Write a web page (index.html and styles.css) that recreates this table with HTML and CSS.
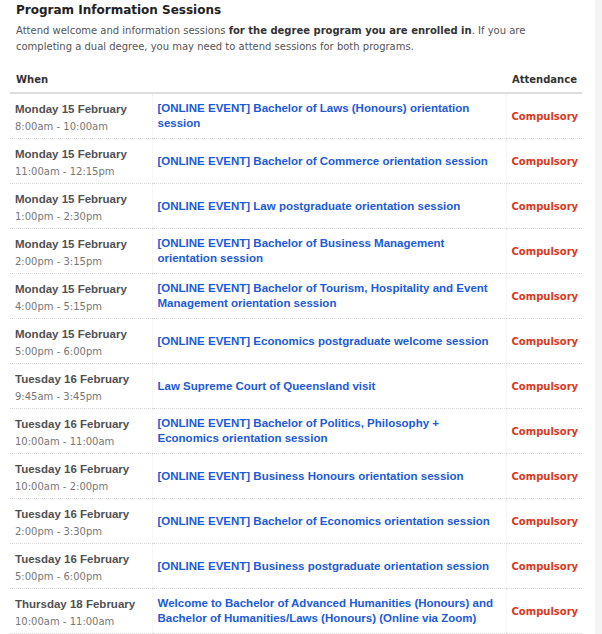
FILE: index.html
```html
<!DOCTYPE html>
<html lang="en">
<head>
<meta charset="utf-8">
<title>Program Information Sessions</title>
<link rel="stylesheet" href="styles.css">
</head>
<body>
<div class="page">
  <main class="main">
    <h2 class="title">Program Information Sessions</h2>
    <p class="intro">Attend welcome and information sessions <strong>for the degree program you are enrolled in</strong>. If you are completing a dual degree, you may need to attend sessions for both programs.</p>
    <table class="sessions">
      <colgroup><col class="col-when"><col class="col-event"><col class="col-att"></colgroup>
      <thead>
        <tr><th>When</th><th></th><th>Attendance</th></tr>
      </thead>
      <tbody>
        <tr><td class="when"><div class="date">Monday 15 February</div><div class="time">8:00am - 10:00am</div></td><td class="event"><a href="#">[ONLINE EVENT] Bachelor of Laws (Honours) orientation session</a></td><td class="att">Compulsory</td></tr>
        <tr><td class="when"><div class="date">Monday 15 February</div><div class="time">11:00am - 12:15pm</div></td><td class="event"><a href="#">[ONLINE EVENT] Bachelor of Commerce orientation session</a></td><td class="att">Compulsory</td></tr>
        <tr><td class="when"><div class="date">Monday 15 February</div><div class="time">1:00pm - 2:30pm</div></td><td class="event"><a href="#">[ONLINE EVENT] Law postgraduate orientation session</a></td><td class="att">Compulsory</td></tr>
        <tr><td class="when"><div class="date">Monday 15 February</div><div class="time">2:00pm - 3:15pm</div></td><td class="event"><a href="#">[ONLINE EVENT] Bachelor of Business Management orientation session</a></td><td class="att">Compulsory</td></tr>
        <tr><td class="when"><div class="date">Monday 15 February</div><div class="time">4:00pm - 5:15pm</div></td><td class="event"><a href="#">[ONLINE EVENT] Bachelor of Tourism, Hospitality and Event Management orientation session</a></td><td class="att">Compulsory</td></tr>
        <tr><td class="when"><div class="date">Monday 15 February</div><div class="time">5:00pm - 6:00pm</div></td><td class="event"><a href="#">[ONLINE EVENT] Economics postgraduate welcome session</a></td><td class="att">Compulsory</td></tr>
        <tr><td class="when"><div class="date">Tuesday 16 February</div><div class="time">9:45am - 3:45pm</div></td><td class="event"><a href="#">Law Supreme Court of Queensland visit</a></td><td class="att">Compulsory</td></tr>
        <tr><td class="when"><div class="date">Tuesday 16 February</div><div class="time">10:00am - 11:00am</div></td><td class="event"><a href="#">[ONLINE EVENT] Bachelor of Politics, Philosophy + Economics orientation session</a></td><td class="att">Compulsory</td></tr>
        <tr><td class="when"><div class="date">Tuesday 16 February</div><div class="time">10:00am - 2:00pm</div></td><td class="event"><a href="#">[ONLINE EVENT] Business Honours orientation session</a></td><td class="att">Compulsory</td></tr>
        <tr><td class="when"><div class="date">Tuesday 16 February</div><div class="time">2:00pm - 3:30pm</div></td><td class="event"><a href="#">[ONLINE EVENT] Bachelor of Economics orientation session</a></td><td class="att">Compulsory</td></tr>
        <tr><td class="when"><div class="date">Tuesday 16 February</div><div class="time">5:00pm - 6:00pm</div></td><td class="event"><a href="#">[ONLINE EVENT] Business postgraduate orientation session</a></td><td class="att">Compulsory</td></tr>
        <tr><td class="when"><div class="date">Thursday 18 February</div><div class="time">10:00am - 11:00am</div></td><td class="event"><a href="#">Welcome to Bachelor of Advanced Humanities (Honours) and Bachelor of Humanities/Laws (Honours) (Online via Zoom)</a></td><td class="att">Compulsory</td></tr>
      </tbody>
    </table>
  </main>
  <aside class="gutter"></aside>
</div>
</body>
</html>
```
FILE: styles.css
```css
html, body {
  margin: 0;
  padding: 0;
  background: #fff;
}
.page {
  display: flex;
  min-height: 634px;
}
.main {
  flex: 0 0 595px;
  box-sizing: border-box;
  padding: 0 13px 0 10px;
  font-family: "DejaVu Sans", Verdana, sans-serif;
}
.gutter {
  flex: 1;
  background: #f4f4f4;
}
.title {
  margin: 0;
  padding: 0 6px;
  font-size: 12px;
  line-height: 20px;
  font-weight: bold;
  color: #222;
}
.intro {
  margin: 3px 0 0;
  padding: 0 6px;
  font-size: 10px;
  line-height: 16px;
  color: #555;
}
.intro strong {
  color: #333;
}
.sessions {
  width: 100%;
  margin-top: 15px;
  border-collapse: collapse;
  table-layout: fixed;
}
.col-when { width: 142px; }
.col-att { width: 76px; }
.sessions th {
  text-align: left;
  font-size: 10px;
  line-height: 16px;
  font-weight: bold;
  color: #333;
  padding: 2px 6px 4px;
  border-bottom: 2px solid #ddd;
}
.sessions td {
  height: 44px;
  padding: 0 6px 0 5px;
  vertical-align: middle;
  border-bottom: 1px dotted #d8d8d8;
}
.sessions td + td {
  border-left: 1px dotted #efefef;
}
.sessions td.event {
  padding-left: 5px;
  font-family: "Liberation Sans", Arial, sans-serif;
  font-size: 11.5px;
  line-height: 15px;
}
.date {
  margin-top: 4px;
  font-family: "Liberation Sans", Arial, sans-serif;
  font-weight: bold;
  font-size: 11.5px;
  line-height: 16px;
  color: #515151;
  white-space: nowrap;
}
.time {
  font-size: 10px;
  line-height: 16px;
  color: #777;
  margin-top: 2px;
  white-space: nowrap;
}
.event a {
  font-weight: bold;
  color: #1c5ad8;
  text-decoration: none;
}
.sessions td.att {
  height: 42px;
  padding-top: 2px;
  font-size: 10px;
  line-height: 16px;
  font-weight: bold;
  color: #d9381e;
  white-space: nowrap;
}
```
